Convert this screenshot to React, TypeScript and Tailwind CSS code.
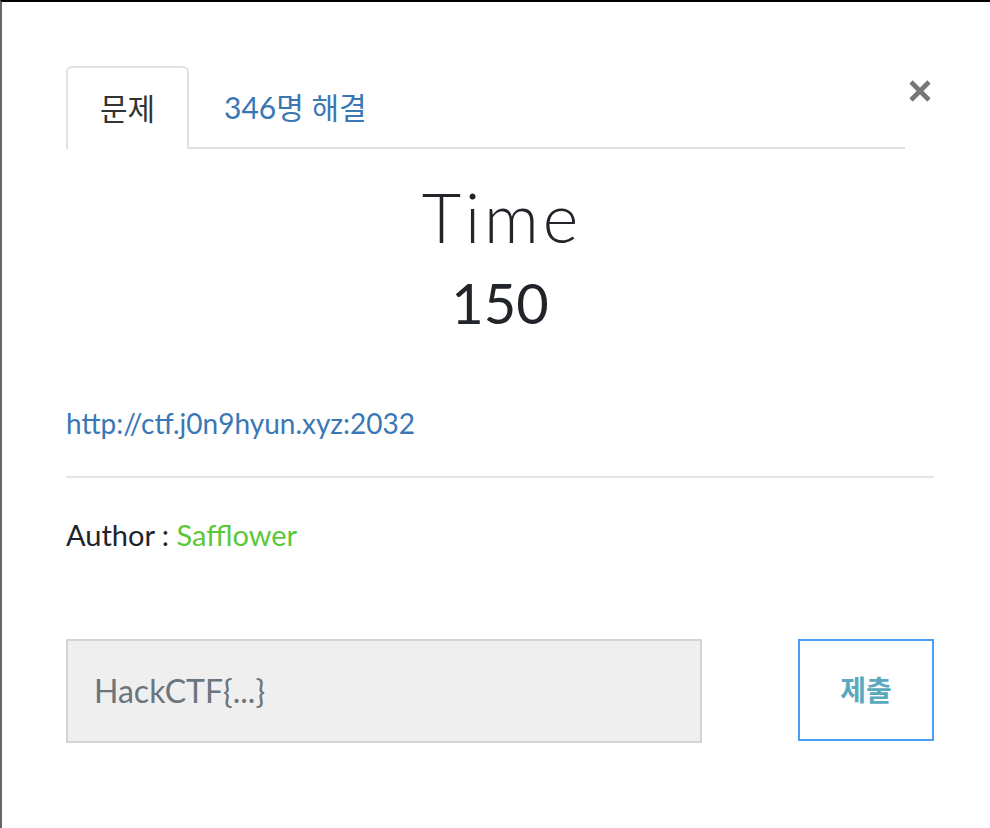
import React from "react";

const font = { fontFamily: "Lato, 'Noto Sans CJK KR', sans-serif" };

export default function App() {
  return (
    <div
      className="w-[990px] h-[828px] bg-white border-t-2 border-t-black border-l-2 border-l-[#666] overflow-hidden text-[#212529]"
      style={font}
    >
      <div className="pt-[64px] pl-[64px] pr-[56px]">
        {/* tabs row */}
        <div className="flex items-start">
          <div className="flex flex-1 border-b-2 border-[#dee2e6] h-[83px]">
            <div className="w-[123px] h-[83px] border-2 border-b-0 border-[#dee2e6] rounded-t-[6px] bg-white flex items-center justify-center text-[30px] text-[#333] -mb-[2px]">
              문제
            </div>
            <div className="h-[83px] flex items-center pl-[35px] text-[30px] text-[#3a77b5]">
              346명 해결
            </div>
          </div>
          <div className="w-[29px] flex justify-end pt-[13px] pr-[2px]">
            <svg width="24" height="24" viewBox="0 0 24 24">
              <path d="M3 3 L21 21 M21 3 L3 21" stroke="#777" strokeWidth="4.6" strokeLinecap="butt" />
            </svg>
          </div>
        </div>

        {/* title */}
        <div className="flex flex-col items-center">
          <div className="text-[68px] font-light leading-none mt-[34px] tracking-[4px] pl-[4px]">Time</div>
          <div className="text-[56px] leading-none mt-[24px]">150</div>
        </div>

        <div className="mt-[78px] text-[28px] leading-none text-[#3a77b5]">http://ctf.j0n9hyun.xyz:2032</div>

        <div className="mt-[39px] border-t-2 border-[#e5e5e5]" />

        <div className="mt-[42px] text-[29px] leading-none">
          Author : <span className="text-[#5bc83a]">Safflower</span>
        </div>

        <div className="mt-[90px] flex items-start justify-between">
          <div className="w-[636px] h-[104px] bg-[#efefef] border-2 border-[#d1d5d8] flex items-center pl-[26px] text-[32px] text-[#6c757d]">
            HackCTF{"{...}"}
          </div>
          <div className="w-[136px] h-[102px] border-2 border-[#4a9ff5] bg-white flex items-center justify-center text-[28px] font-bold text-[#5aa9bd]">
            제출
          </div>
        </div>
      </div>
    </div>
  );
}
